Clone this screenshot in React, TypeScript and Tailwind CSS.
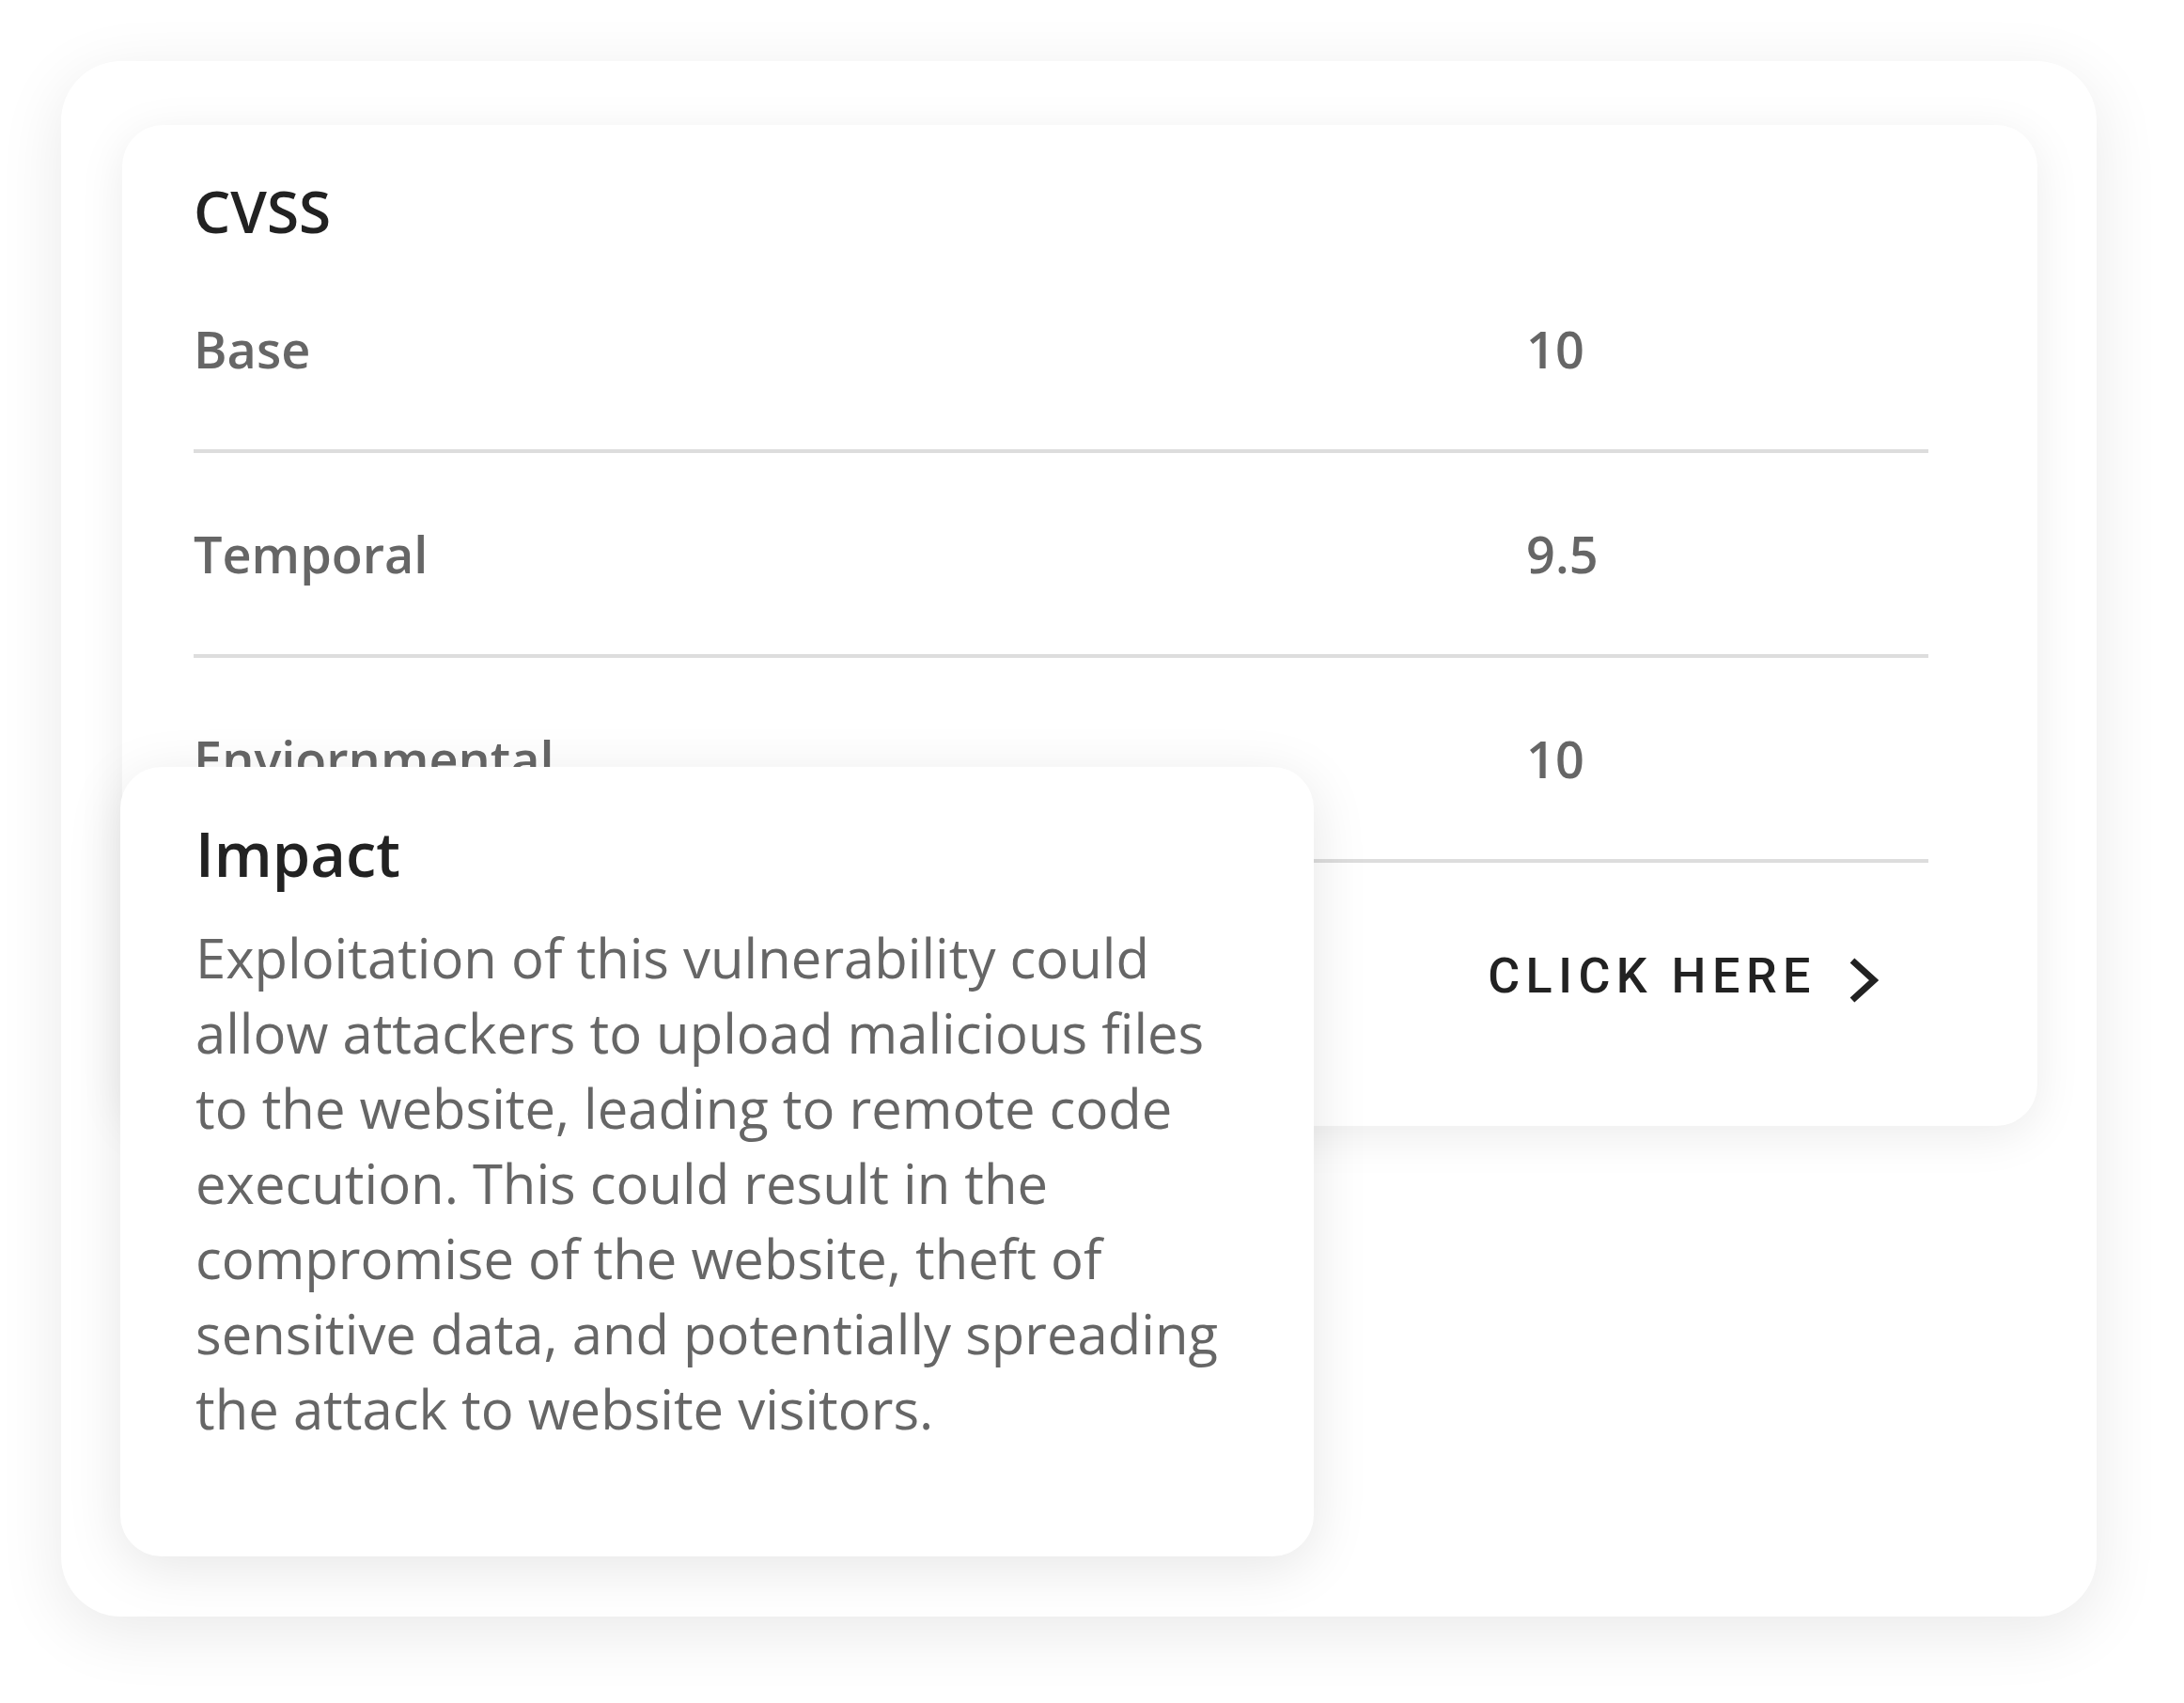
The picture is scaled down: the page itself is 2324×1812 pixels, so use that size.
import React from "react";

const rows = [
  { label: "Base", value: "10" },
  { label: "Temporal", value: "9.5" },
  { label: "Enviornmental", value: "10" },
];

const impactLines = [
  "Exploitation of this vulnerability could",
  "allow attackers to upload malicious files",
  "to the website, leading to remote code",
  "execution. This could result in the",
  "compromise of the website, theft of",
  "sensitive data, and potentially spreading",
  "the attack to website visitors.",
];

function Chevron() {
  return (
    <svg width="32" height="50" viewBox="0 0 32 50" fill="none" className="mt-[8px]">
      <path d="M4 4 L27 25 L4 46" stroke="#222222" strokeWidth="7" strokeLinejoin="miter" />
    </svg>
  );
}

export default function App() {
  return (
    <div className="w-[2324px] h-[1812px] bg-white pl-[65px] pt-[65px] font-['Open_Sans',sans-serif]">
      <div className="relative w-[2166px] h-[1655px] rounded-[64px] bg-white pl-[65px] pt-[68px] shadow-[0_16px_70px_rgba(0,0,0,0.09)]">
        {/* CVSS card */}
        <div className="w-[2038px] h-[1065px] rounded-[44px] bg-white pl-[76px] pr-[116px] pt-[51px] shadow-[0_10px_50px_rgba(0,0,0,0.08)]">
          <h2 className="text-[62px] leading-[80px] font-semibold text-[#222222]">CVSS</h2>
          <div>
            {rows.map((row) => (
              <div
                key={row.label}
                className="grid grid-cols-[1418px_1fr] items-center h-[218px] border-b-4 border-[#dddddd]"
              >
                <span className="text-[54px] leading-[64px] font-semibold text-[#666666]">{row.label}</span>
                <span className="text-[54px] leading-[64px] font-semibold text-[#666666]">{row.value}</span>
              </div>
            ))}
          </div>
          <div className="flex justify-end pr-[53px] mt-[89px]">
            <button className="flex items-center gap-[34px] font-['Roboto',sans-serif] font-medium text-[52px] leading-[64px] tracking-[0.125em] text-[#222222]">
              CLICK HERE
              <Chevron />
            </button>
          </div>
        </div>

        {/* Impact card */}
        <div className="absolute left-[63px] bottom-[64px] w-[1270px] h-[840px] rounded-[44px] bg-white pl-[80px] pt-[52px] shadow-[0_12px_60px_rgba(0,0,0,0.1)]">
          <h3 className="text-[65px] leading-[80px] font-semibold text-[#222222]">Impact</h3>
          <p className="mt-[31px] text-[58px] leading-[80px] text-[#666666] whitespace-nowrap">
            {impactLines.map((line, i) => (
              <React.Fragment key={i}>
                {line}
                {i < impactLines.length - 1 && <br />}
              </React.Fragment>
            ))}
          </p>
        </div>
      </div>
    </div>
  );
}
